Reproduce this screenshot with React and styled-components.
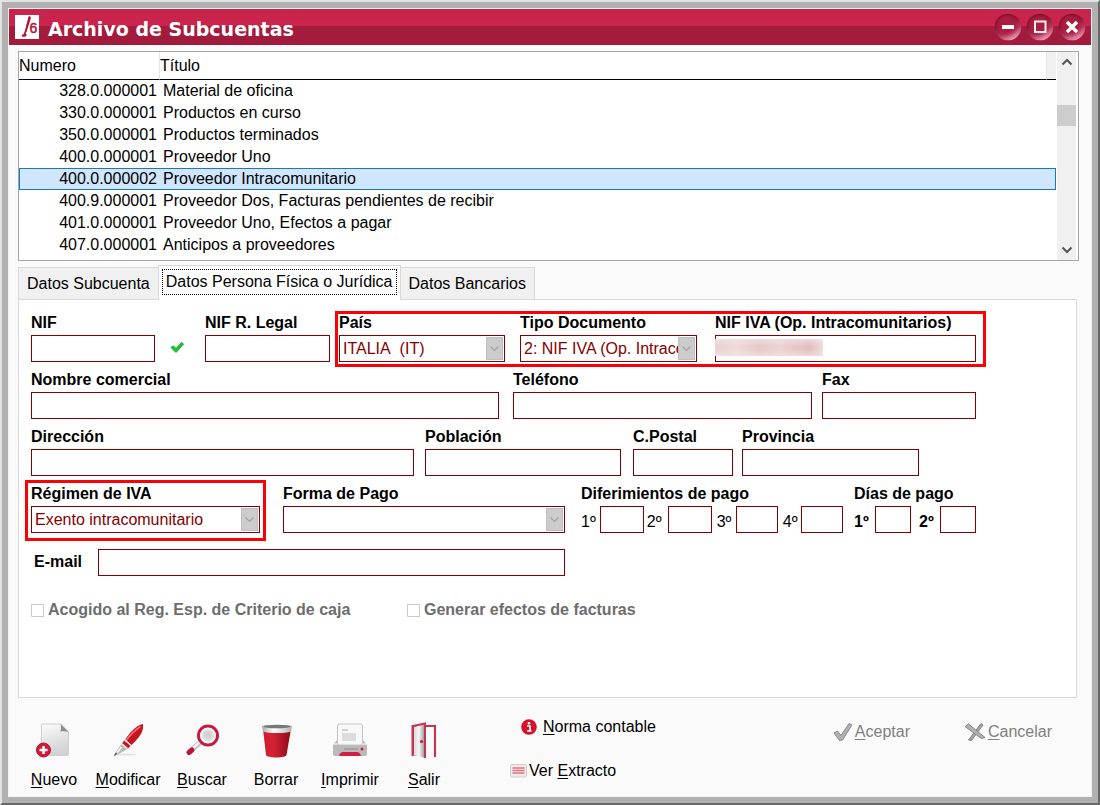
import { useState } from 'react';
import styled, { createGlobalStyle, css } from 'styled-components';

const GlobalStyle = createGlobalStyle`
  * { box-sizing: border-box; }
  body { margin: 0; }
  body, button, input, select {
    font-family: "Liberation Sans", Arial, sans-serif;
    font-size: 16px;
    line-height: 20px;
    color: #000;
  }
`;

const maroon = '#850000';

const Frame = styled.div`
  display: flex;
  min-height: 100vh;
  padding: 6px;
  background: #b1b1b1;
  border: 2px solid #696969;
  border-top-color: #e3e3e3;
  border-left-color: #e3e3e3;
`;

const Window = styled.main`
  flex: 1;
  min-width: 0;
  display: flex;
  flex-direction: column;
  background: #fafafa;
  border: 1px solid #f4f4f4;
`;

const TitleBar = styled.header`
  display: flex;
  align-items: center;
  height: 36px;
  padding: 0 5px 0 6px;
  background: linear-gradient(#c8234b 0, #cb254e 17px, #a41c3e 17px, #a11b3c 100%);

  h1 {
    flex: 1;
    margin: 0 0 0 9px;
    padding-top: 4px;
    color: #fff;
    font: bold 19px/24px "DejaVu Sans", Verdana, sans-serif;
  }
`;

const WindowButtons = styled.div`
  display: flex;
  gap: 4px;
`;

const WindowButton = styled.button`
  display: flex;
  width: 28px;
  height: 28px;
  padding: 0;
  border: 0;
  background: none;
`;

const Body = styled.div`
  flex: 1;
  display: flex;
  flex-direction: column;
  padding: 6px 12px 0 9px;
`;

const ListBox = styled.section`
  display: flex;
  height: 210px;
  background: #fff;
  border: 1px solid #a6a6a6;
`;

const ListTable = styled.table`
  flex: 1;
  align-self: flex-start;
  table-layout: fixed;
  width: 100%;
  border-spacing: 0;

  th {
    height: 28px;
    padding: 0;
    text-align: left;
    font-weight: normal;
    border-bottom: 1px solid #000;
  }
  th + th { border-left: 1px solid #e5e5e5; }
  th:last-child { background: #f0f0f0; }

  td { height: 22px; padding: 0 0 0 4px; }
  td:first-child { padding: 0 2px 0 0; text-align: right; }
`;

const ListRow = styled.tr`
  ${({ $selected }) => $selected && css`
    background: #cfe6fd;
    outline: 1px solid #1878c4;
    outline-offset: -1px;
  `}
`;

const Scrollbar = styled.div`
  display: flex;
  flex-direction: column;
  width: 21px;
  margin-left: 1px;
  border-right: 2px solid #fff;
  background: #f0f0f0;
`;

const ScrollArrow = styled.button`
  display: flex;
  align-items: center;
  justify-content: center;
  height: 20px;
  padding: 0;
  border: 0;
  background: none;
`;

const ScrollTrack = styled.div`
  flex: 1;
  padding-top: 33px;

  div { height: 21px; background: #cdcdcd; }
`;

const Tabs = styled.div`
  display: flex;
  align-items: flex-end;
  height: 38px;
`;

const Tab = styled.button`
  height: ${({ $active }) => ($active ? '35px' : '32px')};
  padding: ${({ $active }) => ($active ? '0 3px 3px' : '0 8px')};
  border: 1px solid #d9d9d9;
  border-bottom: 0;
  background: ${({ $active }) => ($active ? '#fff' : '#f0f0f0')};
  white-space: nowrap;

  ${({ $active }) => $active && css`
    position: relative;
    margin: 0 -1px -1px;
    z-index: 1;
  `}

  span {
    display: block;
    border: ${({ $active }) => ($active ? '1px dotted #000' : '0')};
    padding: ${({ $active }) => ($active ? '2px 3px' : '0')};
  }
`;

const Panel = styled.section`
  flex: 1;
  display: flex;
  flex-direction: column;
  gap: 8px;
  margin-right: 2px;
  padding: 13px 100px 12px 12px;
  background: #fff;
  border: 1px solid #d9d9d9;
`;

const FormRow = styled.div`
  display: flex;
  ${({ $spaced }) => $spaced && 'margin-top: 8px;'}
`;

const Field = styled.div`
  flex: ${({ $size }) => $size} 1 0;
  min-width: 0;
  margin-left: ${({ $gap = 0 }) => $gap}px;
  display: flex;
  flex-direction: column;
  gap: 2px;
`;

const Label = styled.label`
  display: block;
  font-weight: bold;
  white-space: nowrap;
`;

const Filler = styled.div`
  flex: ${({ $size }) => $size} 1 0;
`;

const TextInput = styled.input`
  display: block;
  width: 100%;
  min-width: 0;
  height: 27px;
  padding: 0 3px;
  border: 1px solid ${maroon};
  border-radius: 0;
  background: #fff;
  color: ${maroon};
`;

const ValidMark = styled.div`
  display: flex;
  width: 50px;
  padding: 28px 0 0 15px;
`;

const Highlight = styled.div`
  position: relative;
  display: flex;
  flex: ${({ $size, $fixed = 0 }) => `${$size} 1 ${$fixed}px`};
  min-width: 0;
  margin-left: ${({ $gap = 0 }) => $gap}px;

  &::after {
    content: "";
    position: absolute;
    inset: ${({ $inset }) => $inset};
    border: 3px solid #fb0007;
    pointer-events: none;
  }
`;

const SelectBox = styled.div`
  position: relative;

  select {
    display: block;
    width: 100%;
    height: 27px;
    padding: 0 18px 0 3px;
    appearance: none;
    border: 1px solid ${maroon};
    border-radius: 0;
    background: #fff;
    color: ${maroon};
  }

  svg {
    position: absolute;
    top: 2px;
    right: 2px;
    pointer-events: none;
  }
`;

const MaskedBox = styled.div`
  position: relative;
`;

const Mask = styled.span`
  position: absolute;
  top: 4px;
  left: 0;
  width: 108px;
  height: 17px;
  background:
    linear-gradient(#f3e6e6aa 0, #f3e6e600 40%, #f3e6e600 60%, #f3e6e6aa 100%),
    linear-gradient(90deg, #ead0d0, #efdada 20%, #e6c8c8 42%, #ecd3d3 60%, #e2bebe 88%, #efdcdc);
`;

const Installments = styled.div`
  display: flex;
  align-items: center;
`;

const IndexLabel = styled.label`
  flex: none;
  width: ${({ $width }) => $width}px;
  padding-left: ${({ $pad = 0 }) => $pad}px;
  font-weight: ${({ $bold }) => ($bold ? 'bold' : 'normal')};
  padding-top: 4px;
`;

const IndexInput = styled(TextInput)`
  flex: ${({ $size }) => $size} 1 0;
  width: 0;
`;

const EmailLabel = styled(Label)`
  width: 67px;
  padding: 3px 0 0 3px;
`;

const EmailInput = styled(TextInput)`
  flex: 459 1 8px;
  width: 0;
`;

const CheckRow = styled.div`
  display: flex;
  margin-top: 16px;
`;

const CheckLabel = styled.label`
  flex: ${({ $size }) => $size} 1 0;
  display: flex;
  align-items: center;
  gap: 4px;
  color: #6d6d6d;
  font-weight: bold;
  white-space: nowrap;

  input {
    appearance: none;
    width: 13px;
    height: 13px;
    margin: 0;
    border: 1px solid #ccc;
    background: #fff;
  }
`;

const Footer = styled.footer`
  display: flex;
  align-items: flex-start;
  height: 98px;
  padding: 19px 39px 0 8px;

  u { text-underline-offset: 2px; }
`;

const ToolButton = styled.button`
  display: flex;
  flex-direction: column;
  align-items: center;
  gap: 10px;
  width: 74px;
  padding: 5px 0 0;
  border: 0;
  background: none;
  white-space: nowrap;
`;

const Links = styled.div`
  display: flex;
  flex-direction: column;
  align-items: flex-start;
  gap: 24px;
  margin-left: 49px;
`;

const TextButton = styled.button`
  display: flex;
  align-items: center;
  gap: ${({ $gap = 2 }) => $gap}px;
  padding: 0;
  border: 0;
  background: none;
  color: ${({ $muted }) => ($muted ? '#808080' : '#000')};
  white-space: nowrap;
  ${({ $indent }) => $indent && 'margin-left: 11px;'}
`;

const Actions = styled.div`
  display: flex;
  gap: 54px;
  margin-left: auto;
  padding-top: 5px;
`;

const accounts = [
  ['328.0.000001', 'Material de oficina'],
  ['330.0.000001', 'Productos en curso'],
  ['350.0.000001', 'Productos terminados'],
  ['400.0.000001', 'Proveedor Uno'],
  ['400.0.000002', 'Proveedor Intracomunitario'],
  ['400.9.000001', 'Proveedor Dos, Facturas pendientes de recibir'],
  ['401.0.000001', 'Proveedor Uno, Efectos a pagar'],
  ['407.0.000001', 'Anticipos a proveedores'],
];

const tabs = ['Datos Subcuenta', 'Datos Persona Física o Jurídica', 'Datos Bancarios'];

function Logo() {
  return (
    <svg width="24" height="24" viewBox="0 0 24 24">
      <rect width="24" height="24" fill="#fff" />
      <path d="M13.500 1.500c1.500-.6 2.800.2 2.300 2L11.500 17l-1.800-.4z" fill="#b11638" />
      <path d="M9.800 16l1.600.5-.6 2.500c1 .2 1.200 1.500.2 2.200-1.400.9-3.800.9-4.200-.3-.2-.9.600-1.500 1.800-1.700z" fill="#b11638" />
      <text x="14.500" y="18" fontFamily="Liberation Sans" fontSize="14" fill="#b11638" stroke="#b11638" strokeWidth="0.500">6</text>
    </svg>
  );
}

function Orb({ children }) {
  return (
    <svg width="28" height="28" viewBox="0 0 28 28">
      <defs>
        <linearGradient id="orb" x1="0.25" y1="0" x2="0.75" y2="1">
          <stop offset="0" stopColor="#7d0f29" />
          <stop offset="0.35" stopColor="#8f1733" />
          <stop offset="0.65" stopColor="#b5345a" />
          <stop offset="1" stopColor="#f3a9bd" />
        </linearGradient>
        <radialGradient id="orbCore" cx="0.45" cy="0.42" r="0.55">
          <stop offset="0.5" stopColor="#aa1d41" />
          <stop offset="1" stopColor="#aa1d41" stopOpacity="0" />
        </radialGradient>
      </defs>
      <circle cx="14" cy="14" r="13.300" fill="url(#orb)" />
      <circle cx="13.500" cy="13.500" r="11.500" fill="url(#orbCore)" />
      {children}
    </svg>
  );
}

function Chevron({ up }) {
  return (
    <svg width="12" height="8" viewBox="0 0 12 8">
      <path d={up ? 'M1.500 6.500 6 2l4.500 4.500' : 'M1.500 1.500 6 6l4.500-4.500'} fill="none" stroke="#555" strokeWidth="2" />
    </svg>
  );
}

function DropArrow() {
  return (
    <svg width="17" height="23" viewBox="0 0 17 23">
      <rect x="0.500" y="0.500" width="16" height="22" fill="#ccc" stroke="#bfbfbf" />
      <path d="m4.500 9.500 4 4 4-4" fill="none" stroke="#a3a3a3" strokeWidth="1.200" />
    </svg>
  );
}

function NewIcon() {
  return (
    <svg width="38" height="38" viewBox="0 0 38 38">
      <defs>
        <linearGradient id="page" x1="0" y1="0" x2="0.300" y2="1">
          <stop offset="0" stopColor="#fcfcfc" /><stop offset="1" stopColor="#d2d2d2" />
        </linearGradient>
      </defs>
      <path d="M8 2h18.500l7 7.500V32a1.500 1.500 0 0 1-1.500 1.500H8A1.500 1.500 0 0 1 6.500 32V3.500A1.500 1.500 0 0 1 8 2z" fill="url(#page)" stroke="#d0d0d0" />
      <path d="M25.500 2c1 3 .5 5.500 0 7.500 3-.5 6-.5 8.500 1z" fill="#8c8c8c" />
      <circle cx="8.500" cy="28" r="7" fill="#cf1b3b" stroke="#b51434" />
      <path d="M8.500 24v8M4.500 28h8" stroke="#fff" strokeWidth="2.400" />
    </svg>
  );
}

function PenIcon() {
  return (
    <svg width="38" height="38" viewBox="0 0 38 38">
      <ellipse cx="16" cy="32.500" rx="11" ry="1" fill="#e9dede" />
      <path d="M34 2c1 6-2.500 12-7.500 17l-8 8-6-5 7-9C24 7 29 3 34 2z" fill="#c4161f" />
      <path d="M31.500 4.500C25 9 20 14 16 20" stroke="#ee6970" strokeWidth="1.800" fill="none" />
      <path d="m12.500 22 6 5-8 4.500-5.500 2.500 3-6z" fill="#b9b9b9" />
      <path d="m12.500 25-5.500 7" stroke="#fff" strokeWidth="1.500" />
      <path d="m15.500 17.500 6.500 6M12.500 21.500l6 5" stroke="#f5f5f5" strokeWidth="1.500" />
      <path d="m7 30-2.500 4.500 4-2.500z" fill="#666" />
    </svg>
  );
}

function SearchIcon() {
  return (
    <svg width="38" height="38" viewBox="0 0 38 38">
      <defs>
        <radialGradient id="lens" cx="0.500" cy="0.450" r="0.600">
          <stop offset="0" stopColor="#cacaca" /><stop offset="1" stopColor="#f6f6f6" />
        </radialGradient>
      </defs>
      <path d="m6 30 13-11" stroke="#c6c6c6" strokeWidth="5" strokeLinecap="round" />
      <path d="m10 26 8-7" stroke="#fafafa" strokeWidth="2" />
      <path d="m6 30.500 3-2.500" stroke="#b81436" strokeWidth="5" strokeLinecap="round" />
      <circle cx="25" cy="13.500" r="9.500" fill="url(#lens)" stroke="#c61a3e" strokeWidth="3" />
      <circle cx="25" cy="13.500" r="7" fill="none" stroke="#fff" strokeWidth="1.500" />
    </svg>
  );
}

function BinIcon() {
  return (
    <svg width="38" height="38" viewBox="0 0 38 38">
      <defs>
        <linearGradient id="bin"><stop offset="0" stopColor="#c91a2b" /><stop offset="0.350" stopColor="#d52336" /><stop offset="1" stopColor="#8e0a18" /></linearGradient>
        <linearGradient id="binRim"><stop offset="0" stopColor="#aaa" /><stop offset="0.400" stopColor="#fff" /><stop offset="1" stopColor="#b0b0b0" /></linearGradient>
      </defs>
      <path d="m6 7 3 26c.2 1.500 5 2.500 10.500 2.500S29.300 34.500 29.500 33L34 7z" fill="url(#bin)" />
      <path d="M5 4c0-1.500 30-1.500 30 0l-.8 5.500c-6 2-22.400 2-28.400 0z" fill="url(#binRim)" />
      <ellipse cx="20" cy="4.500" rx="13.500" ry="1.800" fill="#777" />
    </svg>
  );
}

function PrinterIcon() {
  return (
    <svg width="38" height="38" viewBox="0 0 38 38">
      <path d="M6 18h26l4 5v9a2 2 0 0 1-2 2H4a2 2 0 0 1-2-2v-9z" fill="#b9b9b9" />
      <path d="M3 22h32" stroke="#dedede" strokeWidth="2" />
      <rect x="6.500" y="2" width="25" height="21" rx="2" fill="#f8f8f8" stroke="#c6c6c6" />
      <path d="M11 8h6" stroke="#aaa" />
      <rect x="11" y="11" width="14" height="8" fill="#dcdcdc" />
      <path d="M13 27h14" stroke="#8d8d8d" />
      <circle cx="31" cy="27" r="1.500" fill="#cc1b3d" />
      <path d="M8 34c1-3 2-4 4-4h14c2 0 3 1 4 4z" fill="#d01f40" />
    </svg>
  );
}

function DoorIcon() {
  return (
    <svg width="38" height="38" viewBox="0 0 38 38">
      <defs><linearGradient id="door"><stop offset="0" stopColor="#d9d9d9" /><stop offset="0.450" stopColor="#f7f7f7" /><stop offset="1" stopColor="#8f8f8f" /></linearGradient></defs>
      <path d="M21 4h9v31" fill="none" stroke="#c23553" strokeWidth="2.200" />
      <path d="M7.500 3.500h13v30h-13z" fill="#c23553" />
      <path d="m9 5 11-3v34L9 33z" fill="url(#door)" />
      <path d="M7.500 34V4L20 1.500V36" fill="none" stroke="#c23553" strokeWidth="2" />
      <circle cx="16.500" cy="19.500" r="1.600" fill="#c81b40" />
    </svg>
  );
}

const tools = [
  { key: 'N', rest: 'uevo', Icon: NewIcon },
  { key: 'M', rest: 'odificar', Icon: PenIcon },
  { key: 'B', rest: 'uscar', Icon: SearchIcon },
  { key: '', rest: 'Borrar', Icon: BinIcon },
  { key: 'I', rest: 'mprimir', Icon: PrinterIcon },
  { key: 'S', rest: 'alir', Icon: DoorIcon },
];

function TextField({ id, label, size, gap }) {
  return (
    <Field $size={size} $gap={gap}>
      <Label htmlFor={id}>{label}</Label>
      <TextInput id={id} />
    </Field>
  );
}

function SelectField({ id, label, size, gap, value }) {
  return (
    <Field $size={size} $gap={gap}>
      <Label htmlFor={id}>{label}</Label>
      <SelectBox>
        <select id={id} defaultValue={value}>
          <option>{value}</option>
        </select>
        <DropArrow />
      </SelectBox>
    </Field>
  );
}

export default function App() {
  const [selected, setSelected] = useState('400.0.000002');
  const [tab, setTab] = useState(1);

  return (
    <>
      <GlobalStyle />
      <Frame>
        <Window>
          <TitleBar>
            <Logo />
            <h1>Archivo de Subcuentas</h1>
            <WindowButtons>
              <WindowButton type="button" aria-label="Minimizar">
                <Orb><path d="M8 14h12" stroke="#fff" strokeWidth="4" /></Orb>
              </WindowButton>
              <WindowButton type="button" aria-label="Maximizar">
                <Orb><rect x="9" y="8.500" width="10.500" height="10.500" fill="none" stroke="#ffeef2" strokeWidth="2" /></Orb>
              </WindowButton>
              <WindowButton type="button" aria-label="Cerrar">
                <Orb><path d="m9 9 10 10M19 9 9 19" stroke="#fff" strokeWidth="3.500" /></Orb>
              </WindowButton>
            </WindowButtons>
          </TitleBar>

          <Body>
            <ListBox>
              <ListTable>
                <colgroup>
                  <col style={{ width: 140 }} />
                  <col />
                  <col style={{ width: 10 }} />
                </colgroup>
                <thead>
                  <tr>
                    <th>Numero</th>
                    <th>Título</th>
                    <th aria-hidden="true" />
                  </tr>
                </thead>
                <tbody>
                  {accounts.map(([number, title]) => (
                    <ListRow key={number} $selected={number === selected} onClick={() => setSelected(number)}>
                      <td>{number}</td>
                      <td colSpan={2}>{title}</td>
                    </ListRow>
                  ))}
                </tbody>
              </ListTable>
              <Scrollbar>
                <ScrollArrow type="button" aria-label="Subir"><Chevron up /></ScrollArrow>
                <ScrollTrack><div /></ScrollTrack>
                <ScrollArrow type="button" aria-label="Bajar"><Chevron /></ScrollArrow>
              </Scrollbar>
            </ListBox>

            <Tabs role="tablist">
              {tabs.map((name, i) => (
                <Tab key={name} type="button" role="tab" aria-selected={i === tab} $active={i === tab} onClick={() => setTab(i)}>
                  <span>{name}</span>
                </Tab>
              ))}
            </Tabs>

            <Panel>
              <FormRow>
                <TextField id="nif" label="NIF" size={124} />
                <ValidMark>
                  <svg width="14" height="13" viewBox="0 0 14 13">
                    <path d="m1 6.500 2.500-1.500L6 7.500l5.500-6L13.500 3 6 11.500z" fill="#0fd22c" stroke="#0a8a1c" strokeWidth="0.800" />
                  </svg>
                </ValidMark>
                <TextField id="nifLegal" label="NIF R. Legal" size={125} />
                <Highlight $size={604} $fixed={33} $gap={9} $inset="-2px -10px -5px -4px">
                  <SelectField id="pais" label="País" size={166} value={'ITALIA\u00a0 (IT)'} />
                  <SelectField id="tipo" label="Tipo Documento" size={177} gap={15} value="2: NIF IVA (Op. Intracomunitarias)" />
                  <Field $size={261} $gap={18}>
                    <Label htmlFor="nifIva">NIF IVA (Op. Intracomunitarios)</Label>
                    <MaskedBox>
                      <TextInput id="nifIva" />
                      <Mask />
                    </MaskedBox>
                  </Field>
                </Highlight>
              </FormRow>

              <FormRow>
                <TextField id="nombre" label="Nombre comercial" size={468} />
                <TextField id="telefono" label="Teléfono" size={299} gap={14} />
                <TextField id="fax" label="Fax" size={154} gap={10} />
              </FormRow>

              <FormRow>
                <TextField id="direccion" label="Dirección" size={383} />
                <TextField id="poblacion" label="Población" size={196} gap={11} />
                <TextField id="cpostal" label="C.Postal" size={100} gap={12} />
                <TextField id="provincia" label="Provincia" size={177} gap={9} />
                <Filler $size={57} />
              </FormRow>

              <FormRow>
                <Highlight $size={229} $inset="-4px -6px -8px -6px">
                  <SelectField id="regimen" label="Régimen de IVA" size={229} value="Exento intracomunitario" />
                </Highlight>
                <SelectField id="formaPago" label="Forma de Pago" size={282} gap={23} value="" />
                <Field $size={262} $gap={16} role="group" aria-label="Diferimientos de pago">
                  <Label as="span">Diferimientos de pago</Label>
                  <Installments>
                    <IndexLabel htmlFor="dif1" $width={19}>1º</IndexLabel>
                    <IndexInput id="dif1" $size={44} />
                    <IndexLabel htmlFor="dif2" $width={24} $pad={3}>2º</IndexLabel>
                    <IndexInput id="dif2" $size={44} />
                    <IndexLabel htmlFor="dif3" $width={24} $pad={5}>3º</IndexLabel>
                    <IndexInput id="dif3" $size={42} />
                    <IndexLabel htmlFor="dif4" $width={23} $pad={5}>4º</IndexLabel>
                    <IndexInput id="dif4" $size={42} />
                  </Installments>
                </Field>
                <Field $size={122} $gap={11} role="group" aria-label="Días de pago">
                  <Label as="span">Días de pago</Label>
                  <Installments>
                    <IndexLabel htmlFor="dia1" $width={21} $bold>1º</IndexLabel>
                    <IndexInput id="dia1" $size={36} />
                    <IndexLabel htmlFor="dia2" $width={29} $pad={8} $bold>2º</IndexLabel>
                    <IndexInput id="dia2" $size={36} />
                  </Installments>
                </Field>
              </FormRow>

              <FormRow $spaced>
                <EmailLabel htmlFor="email">E-mail</EmailLabel>
                <EmailInput id="email" type="email" />
                <Filler $size={411} />
              </FormRow>

              <CheckRow>
                <CheckLabel $size={376}>
                  <input type="checkbox" disabled />
                  Acogido al Reg. Esp. de Criterio de caja
                </CheckLabel>
                <CheckLabel $size={569}>
                  <input type="checkbox" disabled />
                  Generar efectos de facturas
                </CheckLabel>
              </CheckRow>
            </Panel>
          </Body>

          <Footer>
            {tools.map(({ key, rest, Icon }) => (
              <ToolButton key={rest} type="button">
                <Icon />
                <span>{key && <u>{key}</u>}{rest}</span>
              </ToolButton>
            ))}
            <Links>
              <TextButton type="button" $gap={6} $indent>
                <svg width="16" height="16" viewBox="0 0 16 16">
                  <circle cx="8" cy="8" r="7.800" fill="#d5122b" />
                  <circle cx="8" cy="4.300" r="1.300" fill="#fff" />
                  <path d="M6 7h3v4.500M6 12h4.500" fill="none" stroke="#fff" strokeWidth="1.700" />
                </svg>
                <span><u>N</u>orma contable</span>
              </TextButton>
              <TextButton type="button">
                <svg width="17" height="14" viewBox="0 0 17 14">
                  <rect x="0.500" y="0.500" width="16" height="12.500" rx="1.500" fill="#ececec" stroke="#cfcfcf" />
                  <path d="M2.500 4h12M2.500 6.500h12M2.500 9h12" stroke="#e8707f" strokeWidth="1.300" />
                </svg>
                <span>Ver <u>E</u>xtracto</span>
              </TextButton>
            </Links>
            <Actions>
              <TextButton type="button" $muted>
                <svg width="20" height="20" viewBox="0 0 20 20">
                  <path d="m1 11 3.500-2 3.500 4.500L16 1.500l3 1.500L9.500 18l-3 .5z" fill="#b0b0b0" stroke="#8a8a8a" />
                </svg>
                <span><u>A</u>ceptar</span>
              </TextButton>
              <TextButton type="button" $muted>
                <svg width="22" height="20" viewBox="0 0 22 20">
                  <path d="M17 1.500 19 3 7.500 18.500l-3-.5z" fill="#a3a3a3" stroke="#858585" />
                  <path d="M1 4.500 4.500 2 21 15.500l-3.500 1z" fill="#b3b3b3" stroke="#858585" />
                </svg>
                <span><u>C</u>ancelar</span>
              </TextButton>
            </Actions>
          </Footer>
        </Window>
      </Frame>
    </>
  );
}
